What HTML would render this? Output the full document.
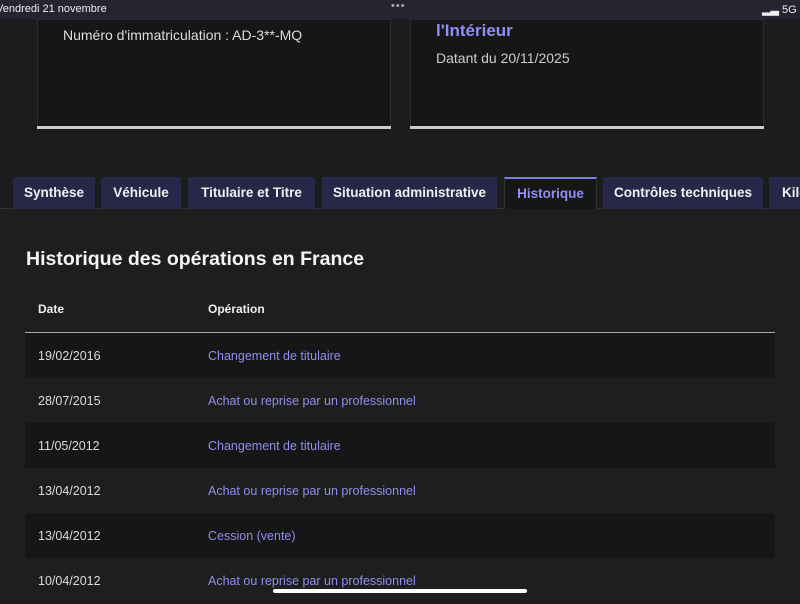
<!DOCTYPE html>
<html><head><meta charset="utf-8"><style>
*{margin:0;padding:0;box-sizing:border-box}
body{width:800px;height:600px;overflow:hidden;background:#1c1c1c;font-family:"Liberation Sans",sans-serif;color:#e8e8e8;position:relative}
.sb{position:absolute;left:0;top:0;width:800px;height:19px;background:#26242f;font-size:11px;color:#eee;white-space:nowrap}
.card{position:absolute;top:19px;width:354px;height:110px;background:#161616;border:1px solid #2c2c2c;border-bottom:none}
.card::after{content:"";position:absolute;left:-1px;right:-1px;bottom:0;height:3px;background:#cecece}
.tab{position:absolute;top:177px;height:32px;background:#272848;color:#f0f0f0;font-weight:bold;font-size:13.5px;line-height:32px;text-align:center;white-space:nowrap;overflow:hidden}
.tab.act{background:#161616;color:#8f8ff5;border-top:2px solid #7a7ae8;line-height:30px;border-left:1px solid #333;border-right:1px solid #333}
.panel{position:absolute;top:208px;left:0;width:800px;height:392px;background:#1e1e1e;border-top:1px solid #333}
h2{position:absolute;left:26px;top:248px;font-size:19.5px;font-weight:bold;color:#f4f4f4}
.th{position:absolute;top:302px;font-size:12px;font-weight:bold;color:#eee}
.hl{position:absolute;left:25px;top:332px;width:750px;height:1px;background:#aaa}
.row{position:absolute;left:25px;width:750px;height:45px;font-size:12.5px;line-height:46px}
.row.s{background:#161616}
.row .d{position:absolute;left:13px;color:#ddd}
.row .o{position:absolute;left:183px;color:#8f8ff0}
</style></head><body>
<div class="sb"><span style="position:absolute;left:-4px;top:3px">Vendredi 21 novembre</span><span style="position:absolute;left:391px;top:0px;color:#aaa;letter-spacing:1px">•••</span><span style="position:absolute;left:762px;top:3px">▂▃ 5G 9</span></div>
<div class="card" style="left:37px"><div style="position:absolute;left:25px;top:7px;font-size:14px;color:#ddd">Numéro d'immatriculation : AD-3**-MQ</div></div>
<div class="card" style="left:410px"><div style="position:absolute;left:25px;top:1px;font-size:17px;font-weight:bold;color:#8f8ff5">l'Intérieur</div><div style="position:absolute;left:25px;top:30px;font-size:14px;color:#ccc">Datant du 20/11/2025</div></div>
<div class="panel"></div>
<div class="tab" style="left:13px;width:82px">Synthèse</div>
<div class="tab" style="left:101px;width:80px">Véhicule</div>
<div class="tab" style="left:188px;width:127px">Titulaire et Titre</div>
<div class="tab" style="left:322px;width:175px">Situation administrative</div>
<div class="tab act" style="left:504px;width:93px">Historique</div>
<div class="tab" style="left:603px;width:160px">Contrôles techniques</div>
<div class="tab" style="left:769px;width:40px;text-align:left;padding-left:13px">Kilo</div>
<h2>Historique des opérations en France</h2>
<div class="th" style="left:38px">Date</div>
<div class="th" style="left:208px">Opération</div>
<div class="hl"></div>
<div class="row s" style="top:333px"><span class="d">19/02/2016</span><span class="o">Changement de titulaire</span></div>
<div class="row" style="top:378px"><span class="d">28/07/2015</span><span class="o">Achat ou reprise par un professionnel</span></div>
<div class="row s" style="top:423px"><span class="d">11/05/2012</span><span class="o">Changement de titulaire</span></div>
<div class="row" style="top:468px"><span class="d">13/04/2012</span><span class="o">Achat ou reprise par un professionnel</span></div>
<div class="row s" style="top:513px"><span class="d">13/04/2012</span><span class="o">Cession (vente)</span></div>
<div class="row" style="top:558px"><span class="d">10/04/2012</span><span class="o">Achat ou reprise par un professionnel</span></div>
<div style="position:absolute;left:273px;top:589px;width:254px;height:4px;border-radius:2px;background:#fff"></div>
</body></html>
